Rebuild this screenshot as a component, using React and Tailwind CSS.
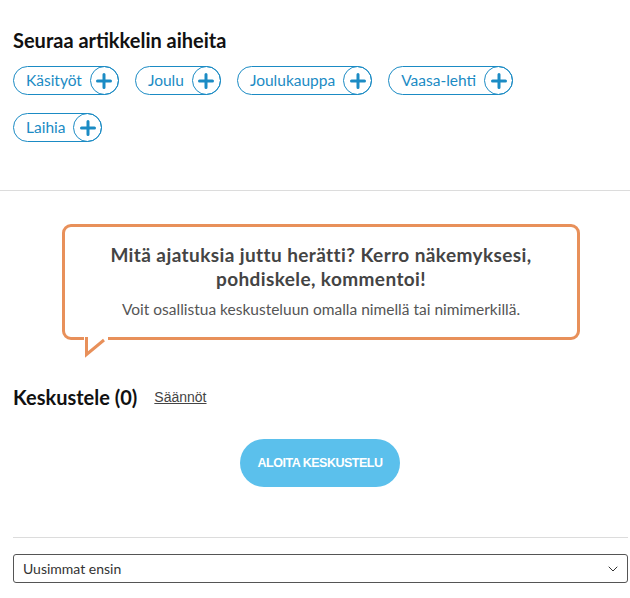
import { ChevronDown } from "lucide-react";

const TAGS = ["Käsityöt", "Joulu", "Joulukauppa", "Vaasa-lehti", "Laihia"];

function Plus() {
  return (
    <svg width="16" height="16" viewBox="0 0 16 16" fill="none">
      <path d="M8 1.5v13M1.5 8h13" stroke="#1b8bc4" strokeWidth="3" strokeLinecap="round" />
    </svg>
  );
}

function Tag({ label }) {
  return (
    <div className="flex items-center h-[29px] rounded-full border border-[#1b8bc4] pl-3">
      <span className="text-[15.5px] text-[#1b8bc4] leading-none">{label}</span>
      <span className="ml-[8px] -mr-px w-[29px] h-[29px] rounded-full border border-[#1b8bc4] flex items-center justify-center">
        <Plus />
      </span>
    </div>
  );
}

export default function App() {
  return (
    <div className="w-[630px] bg-white font-['Lato','Source_Sans_Pro',sans-serif] text-[#111]">
      {/* Topics */}
      <div className="px-[13px] pt-[28px]">
        <h2 className="text-[20px] font-bold leading-6 text-[#111]">Seuraa artikkelin aiheita</h2>
        <div className="mt-[14px] flex flex-wrap gap-x-4 gap-y-[18px] w-[540px]">
          {TAGS.map((t) => (
            <Tag key={t} label={t} />
          ))}
        </div>
      </div>

      <div className="mt-[48px] h-px bg-[#dcdcdc]" />

      {/* Prompt bubble */}
      <div className="relative ml-[62px] mt-[33px] w-[518px]">
        <div className="rounded-[9px] border-[3px] border-[#e8905a] bg-white px-2 pt-[16px] pb-[18px] text-center">
          <p className="text-[19px] font-bold leading-6 tracking-[0.4px] text-[#444]">
            Mitä ajatuksia juttu herätti? Kerro näkemyksesi,
            <br />
            pohdiskele, kommentoi!
          </p>
          <p className="mt-[8px] text-[15.5px] leading-5 text-[#555]">
            Voit osallistua keskusteluun omalla nimellä tai nimimerkillä.
          </p>
        </div>
        <svg className="absolute left-[22px] top-full -mt-[3px]" width="24" height="21" viewBox="0 0 24 21" fill="none">
          <path d="M0 0h24v3H0z" fill="white" />
          <path d="M2.5 0v17.5L20 3" stroke="#e8905a" strokeWidth="3" fill="white" />
        </svg>
      </div>

      {/* Discussion header */}
      <div className="mt-[45px] px-[13px] flex items-center gap-[17px]">
        <h2 className="text-[20px] font-bold leading-6 text-[#111]">Keskustele (0)</h2>
        <a href="#" className="font-['Liberation_Sans',sans-serif] text-[14px] text-[#444] underline">
          Säännöt
        </a>
      </div>

      <div className="mt-[30px] flex justify-center pl-[10px]">
        <button className="h-[48px] w-[160px] rounded-full bg-[#5bc0ec] font-['Liberation_Sans',sans-serif] text-[12.5px] font-bold tracking-[-0.5px] text-white">
          ALOITA KESKUSTELU
        </button>
      </div>

      <div className="mt-[50px] ml-[13px] mr-[2px] h-px bg-[#dcdcdc]" />

      <div className="mt-[16px] ml-[13px] mr-[2px] h-[29px] rounded-[3px] border border-[#555] flex items-center justify-between pl-[9px] pr-[6px]">
        <span className="text-[14px] text-[#333]">Uusimmat ensin</span>
        <ChevronDown size={16} strokeWidth={1.5} className="text-[#333]" />
      </div>
      <div className="h-[15px]" />
    </div>
  );
}
